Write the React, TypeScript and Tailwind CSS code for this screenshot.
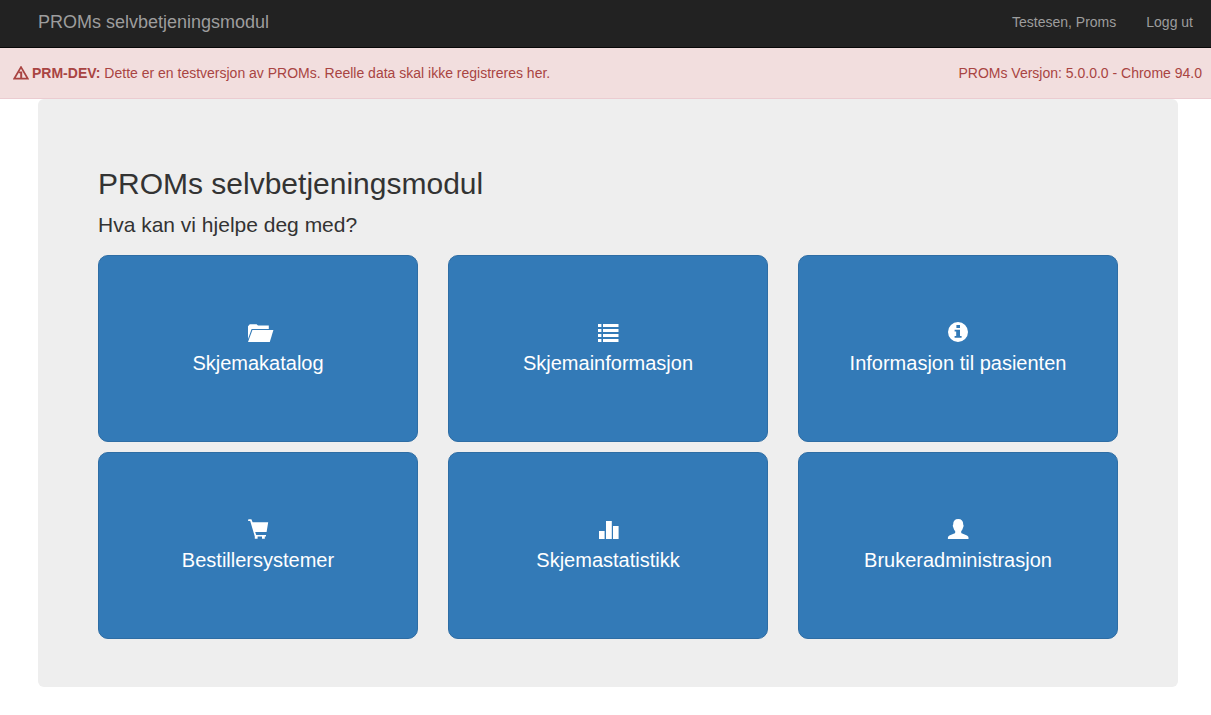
import type { ReactNode } from "react";

function FolderOpenIcon() {
  return (
    <>
      <path d="M5 17V4.2L6.8 2.2H13.6L15 3.6H25.8V7H8.6Z" />
      <path d="M9.4 8H30.4L26.8 20H5Z" />
    </>
  );
}

function ListIcon() {
  return (
    <path d="M5 2H8.4V5H5ZM10 2H25.5V5H10ZM5 7H8.4V10H5ZM10 7H25.5V10H10ZM5 12H8.4V15H5ZM10 12H25.5V15H10ZM5 17H8.4V20H5ZM10 17H25.5V20H10Z" />
  );
}

function InfoIcon() {
  return (
    <path
      fillRule="evenodd"
      d="M15 0A10 10 0 1 1 15 20A10 10 0 1 1 15 0ZM13.4 3V6H17V3ZM11.6 7.8V9.4H13.2V14H11.6V15.8H18.6V14H17V7.8Z"
    />
  );
}

function CartIcon() {
  return (
    <path d="M5.4 0.2H8.4L9.6 3.2H25.2L23.6 13H12.2L13.2 16H23V17.6H21.8V19.8H19V17.6H14.6V19.8H11.8V17.6L7.2 2H5Z" />
  );
}

function StatsIcon() {
  return <path d="M6 12H11.6V20H6ZM13 2H18.8V20H13ZM20 7H25.6V20H20Z" />;
}

function UserIcon() {
  return (
    <path d="M15.2 0C18.6 0 20.2 2 20.2 5.2C20.2 5.8 20.7 6.3 20.6 7.1C20.5 8 20.1 8.4 19.9 9.1C19.5 10.6 18.9 11.6 18.2 12.3V13.4C18.2 14 18.6 14.3 19.2 14.6L24 16.4Q25.5 17.1 25.5 18.6V20H4.9V18.6Q4.9 17.1 6.4 16.4L11.2 14.6C11.8 14.3 12.2 14 12.2 13.4V12.3C11.5 11.6 10.9 10.6 10.5 9.1C10.3 8.4 9.9 8 9.8 7.1C9.7 6.3 10.2 5.8 10.2 5.2C10.2 2 11.8 0 15.2 0Z" />
  );
}

const tiles: { label: string; icon: ReactNode }[] = [
  { label: "Skjemakatalog", icon: <FolderOpenIcon /> },
  { label: "Skjemainformasjon", icon: <ListIcon /> },
  { label: "Informasjon til pasienten", icon: <InfoIcon /> },
  { label: "Bestillersystemer", icon: <CartIcon /> },
  { label: "Skjemastatistikk", icon: <StatsIcon /> },
  { label: "Brukeradministrasjon", icon: <UserIcon /> },
];

export default function App() {
  return (
    <div className="pb-7 font-['Liberation_Sans',Arial,sans-serif] text-sm text-[#333]">
      <nav className="flex h-12 items-center justify-between border-b border-[#080808] bg-[#222] pr-[18px] pb-1 pl-[38px] text-[#9d9d9d]">
        <a href="#" className="text-lg leading-5">
          PROMs selvbetjeningsmodul
        </a>
        <div className="flex gap-[30px] leading-5">
          <a href="#bruker">Testesen, Proms</a>
          <a href="#logg-ut">Logg ut</a>
        </div>
      </nav>

      <div
        role="alert"
        className="flex justify-between border-b border-[#ebccd1] bg-[#f2dede] pt-[15px] pr-[9px] pb-[15px] pl-[13px] leading-5 text-[#a94442]"
      >
        <div className="flex items-center gap-[3px]">
          <svg viewBox="0 0 16 14" className="h-[14px] w-4" fill="currentColor" aria-hidden="true">
            <path fillRule="evenodd" d="M8 -0.6L16.3 13.6H-0.3ZM8 2.8L2.8 11.8H13.2Z" />
            <path d="M5.6 5.4H9.2V12H7.2V7.2H5.6Z" />
          </svg>
          <p>
            <strong>PRM-DEV:</strong> Dette er en testversjon av PROMs. Reelle data skal ikke
            registreres her.
          </p>
        </div>
        <p>PROMs Versjon: 5.0.0.0 - Chrome 94.0</p>
      </div>

      <div className="pr-[33px] pl-[38px]">
        <main className="rounded-md bg-[#eee] px-[60px] pt-[69px] pb-12">
          <h1 className="text-[30px] leading-8">PROMs selvbetjeningsmodul</h1>
          <p className="mt-[10px] text-[21px] leading-[30px]">Hva kan vi hjelpe deg med?</p>
          <div className="mt-[15px] grid grid-cols-3 gap-x-[30px] gap-y-[10px]">
            {tiles.map((tile) => (
              <button
                key={tile.label}
                type="button"
                className="flex h-[187px] flex-col items-center rounded-[10px] border border-[#2e6da4] bg-[#337ab7] pt-[66px] text-white"
              >
                <svg
                  viewBox="0 0 30 20"
                  className="h-5 w-[30px] overflow-visible"
                  fill="currentColor"
                  aria-hidden="true"
                >
                  {tile.icon}
                </svg>
                <span className="mt-2 text-xl leading-[26px]">{tile.label}</span>
              </button>
            ))}
          </div>
        </main>
      </div>
    </div>
  );
}
